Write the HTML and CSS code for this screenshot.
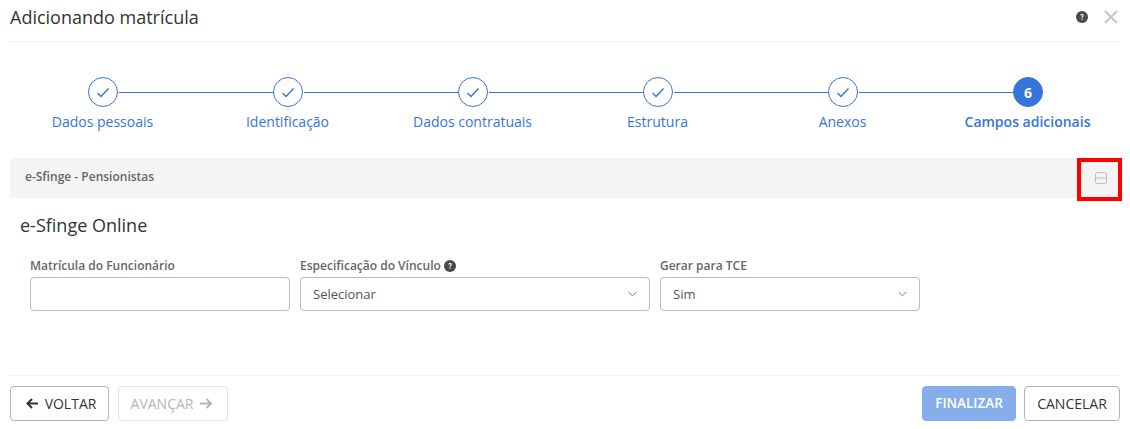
FILE: index.html
```html
<!DOCTYPE html>
<html lang="pt-BR">
<head>
<meta charset="utf-8">
<title>Adicionando matrícula</title>
<link rel="stylesheet" href="styles.css">
</head>
<body>
<div class="modal">
  <header class="modal-head">
    <h1 class="modal-title">Adicionando matrícula</h1>
    <div class="head-actions">
      <svg class="help-icon" width="12" height="12" viewBox="0 0 12 12"><circle cx="6" cy="6" r="6" fill="#4a4a4a"/><path d="M4.2 4.6c0-1 .8-1.6 1.8-1.6s1.8.6 1.8 1.5c0 1.2-1.4 1.2-1.4 2.2H5.5c0-1.5 1.2-1.5 1.2-2.2 0-.3-.3-.5-.7-.5s-.7.2-.7.6z" fill="#fff"/><rect x="5.5" y="7.5" width="1.2" height="1.3" fill="#fff"/></svg>
      <svg class="close-icon" width="14" height="14" viewBox="0 0 14 14"><path d="M1 1l12 12M13 1L1 13" stroke="#c6c6c6" stroke-width="2" fill="none"/></svg>
    </div>
  </header>

  <ol class="stepper">
    <li class="step done"><span class="dot"><svg width="14" height="11" viewBox="0 0 14 11"><path d="M1.5 6l3.5 3.5L12.5 1.5" stroke="#3575db" stroke-width="1.4" fill="none"/></svg></span><span class="step-label">Dados pessoais</span></li>
    <li class="step done"><span class="dot"><svg width="14" height="11" viewBox="0 0 14 11"><path d="M1.5 6l3.5 3.5L12.5 1.5" stroke="#3575db" stroke-width="1.4" fill="none"/></svg></span><span class="step-label">Identificação</span></li>
    <li class="step done"><span class="dot"><svg width="14" height="11" viewBox="0 0 14 11"><path d="M1.5 6l3.5 3.5L12.5 1.5" stroke="#3575db" stroke-width="1.4" fill="none"/></svg></span><span class="step-label">Dados contratuais</span></li>
    <li class="step done"><span class="dot"><svg width="14" height="11" viewBox="0 0 14 11"><path d="M1.5 6l3.5 3.5L12.5 1.5" stroke="#3575db" stroke-width="1.4" fill="none"/></svg></span><span class="step-label">Estrutura</span></li>
    <li class="step done"><span class="dot"><svg width="14" height="11" viewBox="0 0 14 11"><path d="M1.5 6l3.5 3.5L12.5 1.5" stroke="#3575db" stroke-width="1.4" fill="none"/></svg></span><span class="step-label">Anexos</span></li>
    <li class="step current"><span class="dot">6</span><span class="step-label">Campos adicionais</span></li>
  </ol>

  <section class="panel">
    <div class="panel-bar">
      <span class="panel-title">e-Sfinge - Pensionistas</span>
      <svg class="collapse-icon" width="12" height="12" viewBox="0 0 12 12"><rect x=".5" y=".5" width="11" height="11" rx="2" fill="none" stroke="#bdbdbd"/><path d="M.5 6h11" stroke="#bdbdbd"/></svg>
      <span class="highlight"></span>
    </div>
    <h2 class="section-title">e-Sfinge Online</h2>
    <div class="fields">
      <div class="field field-a">
        <label class="field-label">Matrícula do Funcionário</label>
        <div class="control"></div>
      </div>
      <div class="field field-b">
        <label class="field-label">Especificação do Vínculo <svg class="info-icon" width="12" height="12" viewBox="0 0 12 12"><circle cx="6" cy="6" r="6" fill="#4a4a4a"/><path d="M4.2 4.6c0-1 .8-1.6 1.8-1.6s1.8.6 1.8 1.5c0 1.2-1.4 1.2-1.4 2.2H5.5c0-1.5 1.2-1.5 1.2-2.2 0-.3-.3-.5-.7-.5s-.7.2-.7.6z" fill="#fff"/><rect x="5.5" y="7.5" width="1.2" height="1.3" fill="#fff"/></svg></label>
        <div class="control select"><span>Selecionar</span><svg width="9" height="6" viewBox="0 0 9 6"><path d="M.7 1l3.8 3.8L8.3 1" stroke="#777" fill="none"/></svg></div>
      </div>
      <div class="field field-a">
        <label class="field-label">Gerar para TCE</label>
        <div class="control select"><span>Sim</span><svg width="9" height="6" viewBox="0 0 9 6"><path d="M.7 1l3.8 3.8L8.3 1" stroke="#777" fill="none"/></svg></div>
      </div>
    </div>
  </section>

  <footer class="modal-foot">
    <div class="foot-group">
      <button class="btn btn-voltar"><svg width="12" height="11" viewBox="0 0 12 11"><path d="M12 5.5H1.5M6 1L1.5 5.5 6 10" stroke="#333" stroke-width="2" fill="none"/></svg>VOLTAR</button>
      <button class="btn btn-avancar">AVANÇAR<svg width="14" height="11" viewBox="0 0 13 11"><path d="M.5 5.5h11M7 1l4.5 4.5L7 10" stroke="#b5b5b5" stroke-width="2" fill="none"/></svg></button>
    </div>
    <div class="foot-group">
      <button class="btn btn-finalizar">FINALIZAR</button>
      <button class="btn btn-cancelar">CANCELAR</button>
    </div>
  </footer>
</div>
</body>
</html>
```
FILE: styles.css
```css
* { box-sizing: border-box; }
html, body { margin: 0; padding: 0; background: #fff; }
body { font-family: "Open Sans", "Liberation Sans", sans-serif; color: #333; }

.modal { width: 1130px; height: 429px; padding: 0 10px; }

.modal-head {
  height: 42px;
  display: flex;
  align-items: center;
  justify-content: space-between;
  border-bottom: 1px solid #f0f0f0;
  padding-bottom: 7px;
}
.modal-title { margin: 0; font-size: 18px; font-weight: 400; line-height: 24px; color: #333; }
.head-actions { display: flex; align-items: center; gap: 16px; margin-right: 2px; }
.help-icon, .close-icon { display: block; }

.stepper {
  list-style: none;
  margin: 0;
  padding: 35px 0 0;
  display: grid;
  grid-template-columns: repeat(6, 185px);
  height: 116px;
}
.step { position: relative; display: flex; flex-direction: column; align-items: center; }
.step::after {
  content: "";
  position: absolute;
  top: 15px;
  left: calc(50% + 16px);
  width: 155px;
  height: 1px;
  background: #3575db;
}
.step:last-child::after { display: none; }
.dot {
  width: 30px;
  height: 30px;
  margin-left: 1px;
  border-radius: 50%;
  border: 1px solid #3575db;
  display: flex;
  align-items: center;
  justify-content: center;
  color: #fff;
  font-size: 14px;
  font-weight: 700;
  background: #fff;
}
.current .dot { background: #3575db; }
.step-label { margin-top: 5px; font-size: 14px; line-height: 20px; color: #3575db; white-space: nowrap; }
.current .step-label { font-weight: 600; }

.panel-bar {
  position: relative;
  height: 40px;
  background: #f4f4f4;
  display: flex;
  align-items: center;
  justify-content: space-between;
  padding: 0 13px 3px 15px;
}
.panel-title { font-size: 12px; font-weight: 600; color: #666; line-height: 16px; }
.collapse-icon { display: block; margin-top: 3px; }
.highlight {
  position: absolute;
  left: 1067px;
  top: 0;
  width: 45px;
  height: 43px;
  border: 4px solid #f00;
}

.section-title { margin: 15px 0 0 10px; font-size: 18px; font-weight: 400; line-height: 24px; color: #333; }

.fields { display: flex; gap: 10px; padding: 0 0 0 20px; margin-top: 20px; }
.field-a { width: 260px; }
.field-b { width: 350px; }
.field-label {
  display: flex;
  align-items: center;
  gap: 3px;
  height: 18px;
  font-size: 12px;
  font-weight: 600;
  color: #666;
  line-height: 18px;
  margin-bottom: 2px;
}
.control {
  height: 34px;
  border: 1px solid #bbb;
  border-radius: 4px;
  background: #fff;
}
.select {
  display: flex;
  align-items: center;
  justify-content: space-between;
  padding: 0 12px;
  font-size: 13px;
  color: #555;
}

.modal-foot {
  margin-top: 64px;
  border-top: 1px solid #f0f0f0;
  padding-top: 10px;
  display: flex;
  justify-content: space-between;
}
.foot-group { display: flex; gap: 8px; }
.btn {
  height: 35px;
  border: 1px solid #b5b5b5;
  border-radius: 4px;
  background: #fff;
  font-family: inherit;
  font-size: 14px;
  color: #333;
  display: flex;
  align-items: center;
  justify-content: center;
  gap: 6px;
  padding: 0 0 1px;
}
.btn-voltar { width: 99px; padding-left: 3px; gap: 7px; }
.btn-avancar { width: 110px; border-color: #e3e3e3; color: #b5b5b5; margin-left: 1px; padding-right: 2px; }
.btn-finalizar { width: 94px; background: #86aeea; border-color: #86aeea; color: #fff; font-weight: 600; font-size: 13.5px; }
.btn-cancelar { width: 96px; }
```
